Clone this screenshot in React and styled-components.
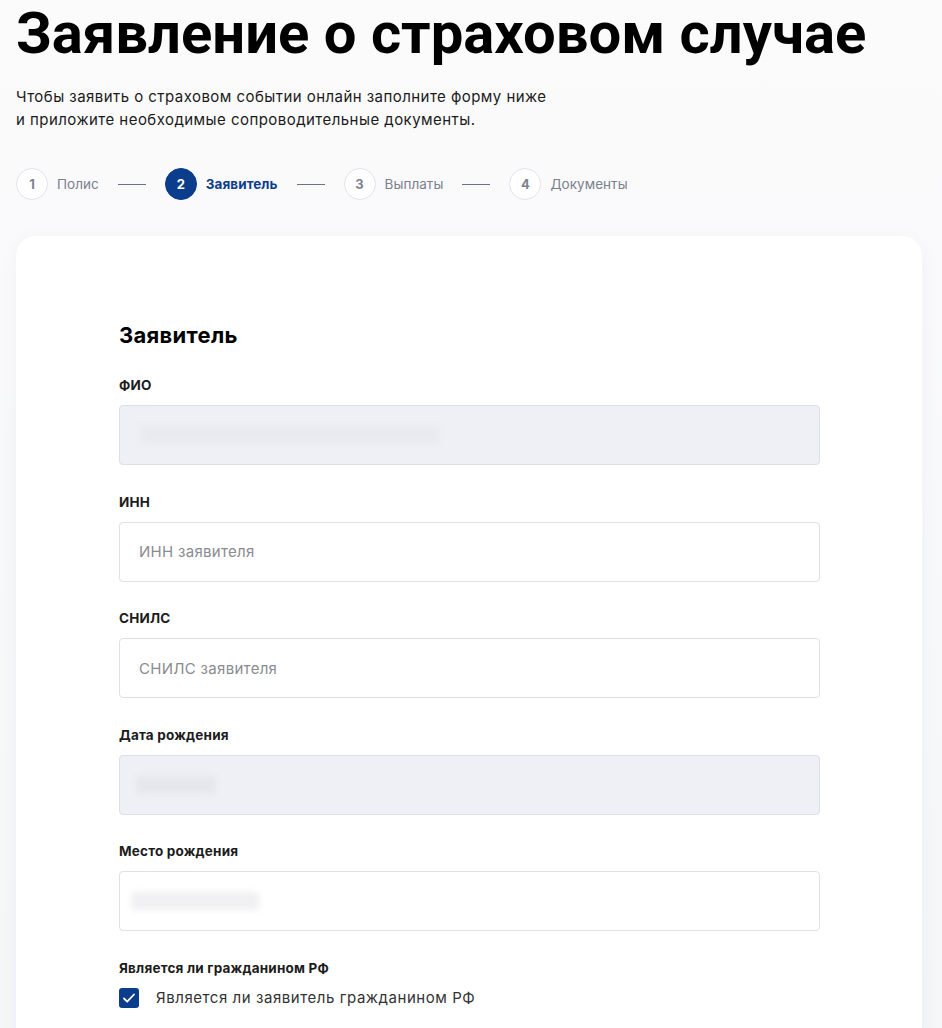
import React from 'react';
import styled, { createGlobalStyle } from 'styled-components';

const GlobalStyle = createGlobalStyle`
  html, body {
    margin: 0;
    padding: 0;
    background: #f7f8fa;
    font-family: Inter, "Noto Sans", sans-serif;
    color: #000;
  }
  * { box-sizing: border-box; }
`;

const Page = styled.div`
  padding: 0 20px 0 16px;
  min-height: 1028px;
  background: linear-gradient(180deg, #fbfbfc 0%, #f5f6f8 100%);
`;

const Title = styled.h1`
  margin: 0;
  padding-top: 2px;
  font-family: Roboto, Inter, sans-serif;
  font-size: 58px;
  line-height: 62px;
  font-weight: 700;
  white-space: nowrap;
`;

const Lead = styled.p`
  margin: 21px 0 0;
  font-size: 15px;
  line-height: 23px;
  letter-spacing: 0.45px;
  color: #1a1a1a;
`;

const Stepper = styled.div`
  display: flex;
  align-items: center;
  margin-top: 37px;
  height: 32px;
`;

const Step = styled.div`
  display: flex;
  align-items: center;
  gap: 9px;
`;

const StepNum = styled.span`
  width: 32px;
  height: 32px;
  border-radius: 50%;
  display: flex;
  align-items: center;
  justify-content: center;
  font-size: 13px;
  font-weight: 700;
  background: ${p => (p.$active ? '#0b3d8c' : '#fff')};
  color: ${p => (p.$active ? '#fff' : '#7d8190')};
  border: 1px solid ${p => (p.$active ? '#0b3d8c' : '#e2e4ea')};
`;

const StepText = styled.span`
  font-size: 13.5px;
  letter-spacing: 0.05px;
  font-weight: ${p => (p.$active ? 700 : 400)};
  color: ${p => (p.$active ? '#0b3d8c' : '#7b7f8e')};
`;

const StepLine = styled.span`
  width: 28px;
  height: 1px;
  background: #6f7382;
  margin: 0 19px;
`;

const Card = styled.section`
  margin-top: 36px;
  background: #fff;
  border-radius: 20px;
  box-shadow: 0 4px 20px rgba(30, 40, 80, 0.04);
  padding: 86px 102px 40px 103px;
  min-height: 820px;
`;

const SectionTitle = styled.h2`
  margin: 0 0 29px;
  font-size: 22px;
  line-height: 26px;
  font-weight: 700;
  letter-spacing: 0.3px;
`;

const Field = styled.div`
  margin-bottom: 28.5px;
`;

const Label = styled.div`
  font-size: 13.5px;
  line-height: 16px;
  font-weight: 700;
  letter-spacing: 0.2px;
  color: #1c1c1c;
  margin-bottom: 12px;
`;

const InputBox = styled.div`
  height: 60px;
  border-radius: 4px;
  border: 1px solid ${p => (p.$disabled ? '#dcdfe6' : '#dfe1e6')};
  background: ${p => (p.$disabled ? '#eff0f5' : '#fff')};
  display: flex;
  align-items: center;
  padding: 0 19px;
  font-size: 15px;
  letter-spacing: 0.3px;
  color: #8a8b90;
`;

const Blur = styled.span`
  display: block;
  height: 18px;
  border-radius: 4px;
  background: ${p => p.$tone};
  filter: blur(3px);
  margin-left: ${p => p.$offset}px;
`;

const CheckRow = styled.label`
  display: flex;
  align-items: center;
  gap: 17px;
  font-size: 15px;
  letter-spacing: 0.55px;
  color: #333;
`;

const CheckBox = styled.span`
  width: 20px;
  height: 20px;
  border-radius: 3px;
  background: #0b3d8c;
  display: flex;
  align-items: center;
  justify-content: center;
`;

const steps = ['Полис', 'Заявитель', 'Выплаты', 'Документы'];

const fields = [
  { label: 'ФИО', disabled: true, blur: { w: 300, tone: '#e9eaf0', off: 1 } },
  { label: 'ИНН', placeholder: 'ИНН заявителя' },
  { label: 'СНИЛС', placeholder: 'СНИЛС заявителя' },
  { label: 'Дата рождения', disabled: true, blur: { w: 80, tone: '#e6e7ed', off: -3 } },
  { label: 'Место рождения', blur: { w: 128, tone: '#f0f0f2', off: -8 } },
];

export default function App() {
  return (
    <>
      <GlobalStyle />
      <Page>
        <Title>Заявление о страховом случае</Title>
        <Lead>
          Чтобы заявить о страховом событии онлайн заполните форму ниже
          <br />и приложите необходимые сопроводительные документы.
        </Lead>
        <Stepper>
          {steps.map((s, i) => (
            <React.Fragment key={s}>
              {i > 0 && <StepLine />}
              <Step>
                <StepNum $active={i === 1}>{i + 1}</StepNum>
                <StepText $active={i === 1}>{s}</StepText>
              </Step>
            </React.Fragment>
          ))}
        </Stepper>
        <Card>
          <SectionTitle>Заявитель</SectionTitle>
          {fields.map(f => (
            <Field key={f.label}>
              <Label>{f.label}</Label>
              <InputBox $disabled={f.disabled}>
                {f.placeholder}
                {f.blur && <Blur style={{ width: f.blur.w }} $tone={f.blur.tone} $offset={f.blur.off} />}
              </InputBox>
            </Field>
          ))}
          <Label>Является ли гражданином РФ</Label>
          <CheckRow>
            <CheckBox>
              <svg width="14" height="14" viewBox="0 0 14 14" fill="none">
                <path d="M2 7.5l3.2 3.2L12 3.5" stroke="#fff" strokeWidth="1.8" strokeLinecap="round" strokeLinejoin="round" />
              </svg>
            </CheckBox>
            Является ли заявитель гражданином РФ
          </CheckRow>
        </Card>
      </Page>
    </>
  );
}
